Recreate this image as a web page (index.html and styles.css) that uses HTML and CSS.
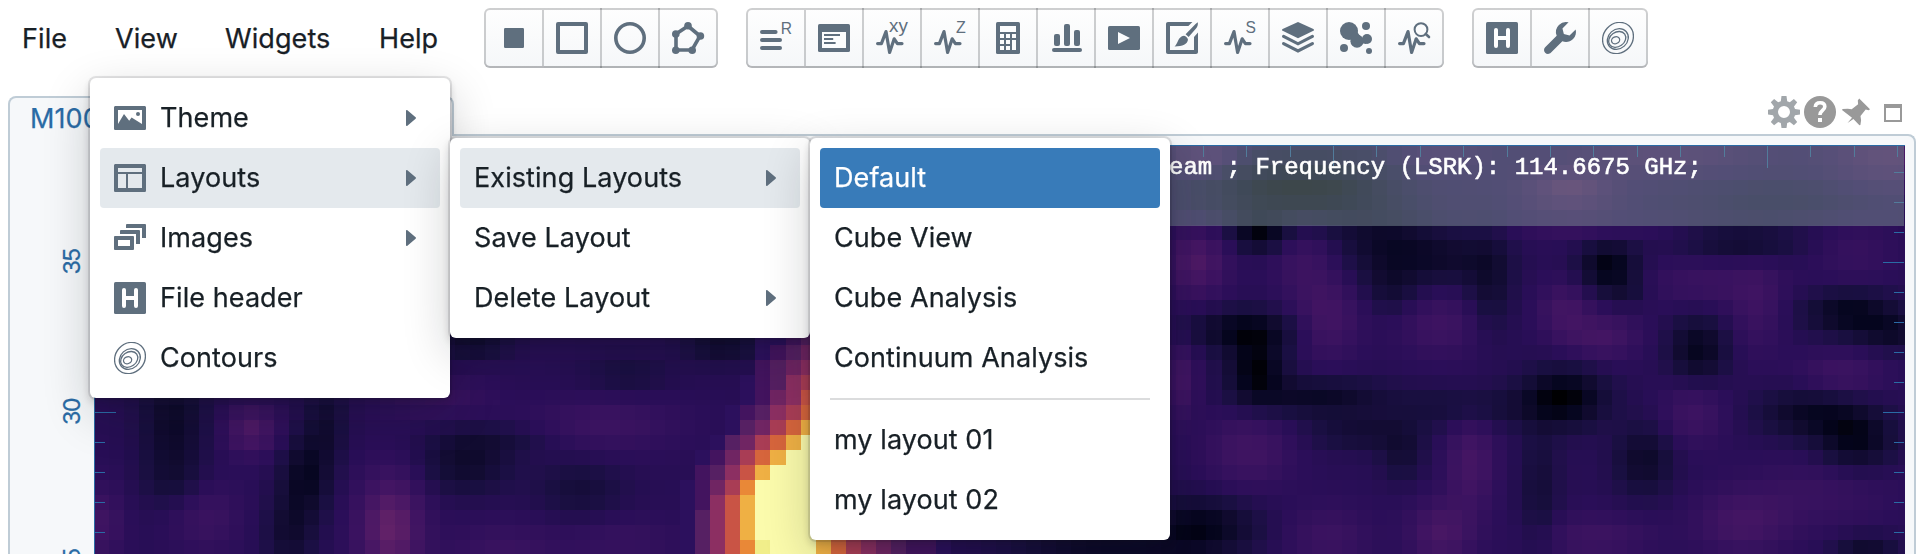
FILE: index.html
```html
<!DOCTYPE html>
<html lang="en">
<head>
<meta charset="utf-8">
<title>M100</title>
<link rel="stylesheet" href="styles.css">
</head>
<body>
<svg class="defs" width="0" height="0">
  <symbol id="pulse" viewBox="0 0 16 16"><path d="M.8 10.800h1.900L5 4.800l1.800 10.400 2.300-6.800 1.600 2.400H13" fill="none" stroke="currentColor" stroke-width="1.600" stroke-linecap="round" stroke-linejoin="round"/></symbol>
  <symbol id="header" viewBox="0 0 16 16"><rect width="16" height="16" rx=".8"/><path d="M5 4v8M11 4v8M5 8h6" stroke="#fff" stroke-width="2" stroke-linecap="round"/></symbol>
  <symbol id="contour" viewBox="0 0 16 16"><g fill="none" stroke="currentColor" stroke-width=".65"><ellipse cx="8" cy="8" rx="8.200" ry="7.300" transform="rotate(-48 8 8)"/><ellipse cx="7.900" cy="8.500" rx="5.600" ry="4.800" transform="rotate(-42 7.900 8.500)"/><ellipse cx="7.600" cy="8.700" rx="4.600" ry="3.600" transform="rotate(-35 7.600 8.700)"/><ellipse cx="6.800" cy="9.100" rx="2.100" ry="1.700" transform="rotate(-25 6.800 9.100)"/></g></symbol>
  <symbol id="caret" viewBox="0 0 10 16"><path d="M0 .8C0 0 .8-.2 1.400.3l8.200 7c.5.4.5 1 0 1.400l-8.200 7C.8 16.200 0 16 0 15.200z"/></symbol>
</svg>

<header class="topbar">
  <nav class="menubar">
    <span class="mb-item mb-file">File</span>
    <span class="mb-item mb-view">View</span>
    <span class="mb-item mb-widgets">Widgets</span>
    <span class="mb-item mb-help">Help</span>
  </nav>
  <div class="toolbars">
    <div class="group">
      <button class="tool"><svg class="icon" viewBox="0 0 16 16"><rect x="3" y="3" width="10" height="10" rx=".6"/></svg></button>
      <button class="tool"><svg class="icon" viewBox="0 0 16 16"><rect x="1" y="1" width="14" height="14" fill="none" stroke="currentColor" stroke-width="2" stroke-linejoin="round"/></svg></button>
      <button class="tool"><svg class="icon" viewBox="0 0 16 16"><circle cx="8" cy="8" r="7.100" fill="none" stroke="currentColor" stroke-width="1.800"/></svg></button>
      <button class="tool"><svg class="icon" viewBox="0 0 16 16"><path d="M8 2l6 5-4 7H2V6z" fill="none" stroke="currentColor" stroke-width="1.800"/><circle cx="8" cy="1.900" r="1.900"/><circle cx="14.200" cy="7" r="1.900"/><circle cx="10.100" cy="14.100" r="1.900"/><circle cx="1.900" cy="14.100" r="1.900"/><circle cx="1.900" cy="6" r="1.900"/></svg></button>
    </div>
    <div class="group">
      <button class="tool"><svg class="icon" viewBox="0 0 16 16"><path d="M1 5h6.800M1 9h9M1 13h9" stroke="currentColor" stroke-width="2" stroke-linecap="round"/><text x="10.400" y="5.800" font-size="7.800">R</text></svg></button>
      <button class="tool"><svg class="icon" viewBox="0 0 16 16"><rect y="1" width="16" height="14" rx=".8"/><rect x="2" y="5" width="12" height="8" fill="#fbfcfd"/><path d="M3 6.500h8M3 8.500h4.600M3 10.500h5.800" stroke="currentColor"/></svg></button>
      <button class="tool"><svg class="icon" viewBox="0 0 16 16"><use href="#pulse"/><text x="6.500" y="4.900" font-size="9.400">xy</text></svg></button>
      <button class="tool"><svg class="icon" viewBox="0 0 16 16"><use href="#pulse"/><text x="11" y="5.600" font-size="8">Z</text></svg></button>
      <button class="tool"><svg class="icon" viewBox="0 0 16 16"><rect x="2" width="12" height="16" rx=".8"/><path d="M4 2h8v3H4zM4 6h2v2H4zM7 6h2v2H7zM10 6h2v2h-2zM4 9h2v2H4zM7 9h2v2H7zM4 12h2v2H4zM7 12h2v2H7zM10 9h2v5h-2z" fill="#fbfcfd"/></svg></button>
      <button class="tool"><svg class="icon" viewBox="0 0 16 16"><rect x="2" y="6" width="3" height="6" rx="1"/><rect x="7" y="1" width="3" height="11" rx="1"/><rect x="12" y="4" width="3" height="8" rx="1"/><rect x="1" y="13" width="15" height="2" rx="1"/></svg></button>
      <button class="tool"><svg class="icon" viewBox="0 0 16 16"><rect y="2" width="16" height="12" rx=".8"/><path d="M5 5v6l6-3z" fill="#fbfcfd"/></svg></button>
      <button class="tool"><svg class="icon" viewBox="0 0 16 16"><path d="M13.200 0l-2 2H2v12h12V7.500l2-2.200V15c0 .600-.4 1-1 1H1c-.6 0-1-.4-1-1V1c0-.6.4-1 1-1z"/><path d="M15.900.1c.2 1.300-.2 2.400-.9 3.200l-3.700 4.200-1.500-1.400L13.800 2C14.400 1.300 15.100.6 15.900.1zM9 6.900c1 .2 1.800 1 2 2C10.600 11.200 8.500 12.200 4.300 12.200 6 11 5.800 7.300 9 6.900z"/></svg></button>
      <button class="tool"><svg class="icon" viewBox="0 0 16 16"><use href="#pulse"/><text x="10.800" y="5.700" font-size="7.800">S</text></svg></button>
      <button class="tool"><svg class="icon" viewBox="0 0 16 16"><path d="M8 0l7.700 3.500c.4.200.4.700 0 .9L8 8.100.3 4.400c-.4-.2-.4-.7 0-.9z"/><path d="M.8 7.200L8 10.900l7.200-3.700M.8 10.800L8 14.500l7.200-3.700" fill="none" stroke="currentColor" stroke-width="1.600" stroke-linecap="round"/></svg></button>
      <button class="tool"><svg class="icon" viewBox="0 0 16 16"><circle cx="4.500" cy="4.500" r="4.500"/><circle cx="8.500" cy="9.600" r="3.300"/><circle cx="13" cy="2" r="2"/><circle cx="13.500" cy="8.500" r="2.500"/><circle cx="2" cy="13" r="2"/><circle cx="14.500" cy="14.500" r="1.500"/><path d="M4 8l4-4 3 4.500 2-1.500v4l-5-1z"/></svg></button>
      <button class="tool"><svg class="icon" viewBox="0 0 16 16"><use href="#pulse"/><g fill="#fbfcfd" stroke="currentColor"><circle cx="11.500" cy="3.800" r="3.200"/><path d="M13.900 6l1.600 1.500" stroke-width="1.300" stroke-linecap="round"/></g></svg></button>
    </div>
    <div class="group">
      <button class="tool"><svg class="icon"><use href="#header"/></svg></button>
      <button class="tool"><svg class="icon" viewBox="0 0 16 16"><path d="M15.830 3.700l-3.060 3.050-2.840-.7-.7-2.830L12.290.17a5.004 5.004 0 00-4.830 1.290 4.967 4.967 0 00-1.120 5.360L.58 12.580c-.36.36-.58.86-.58 1.410 0 1.100.9 2 2 2 .55 0 1.050-.22 1.410-.590l5.770-5.770c1.790.69 3.910.35 5.350-1.120 1.320-1.300 1.740-3.150 1.300-4.810z"/></svg></button>
      <button class="tool"><svg class="icon"><use href="#contour"/></svg></button>
    </div>
  </div>
</header>

<main class="panel">
  <div class="tabs">
    <div class="tab">M100</div>
    <div class="controls">
      <svg class="ctl gear" viewBox="0 0 32 32"><path d="M13.500 0h5l.7 5.200 2.600 1 4.100-3.200 3.300 3.300-3.200 4.100 1 2.700 5 .6v4.800l-5 .7-1 2.600 3.200 4.100-3.300 3.300-4.100-3.200-2.600 1-.7 5h-5l-.7-5-2.600-1-4.100 3.200-3.300-3.300L6 21.800l-1-2.600-5-.7v-4.800l5-.6 1-2.700-3.200-4.100 3.300-3.300 4.100 3.200 2.600-1zM16 10a6 6 0 100 12 6 6 0 000-12z" fill-rule="evenodd"/></svg>
      <svg class="ctl help" viewBox="0 0 32 32"><circle cx="16" cy="16" r="16"/><path d="M11.300 11c.2-3 2.200-4.200 4.800-4.200 2.800 0 4.700 1.400 4.700 3.900 0 3.700-4.900 3.900-4.900 8.300" fill="none" stroke="#fff" stroke-width="3.600"/><rect x="14" y="22" width="4" height="4" fill="#fff"/></svg>
      <svg class="ctl pin" viewBox="0 0 28 28"><path d="M17.200.5L28 11.300l-1.300.9-3-.6-5.200 6.400.6 4.200-.7 4.800-1 .2-6-6.300L5.500 25 10 19.800 0 12l.6-.9 5.200-.3 3.900.5 6.400-5.100-.3-3.600z"/></svg>
      <svg class="ctl square" viewBox="0 0 18 18"><path d="M0 0h18v18H0zM2 4v12h14V4z" fill-rule="evenodd"/></svg>
    </div>
  </div>
  <section class="plot">
    <div class="axis">
      <span class="label label-35">35</span>
      <span class="label label-30">30</span>
      <span class="label label-25">25</span>
    </div>
    <div class="image">
      <canvas id="raster" width="1810" height="408"></canvas>
      <div class="infobar">eam ; Frequency (LSRK): 114.6675 GHz;</div>
    </div>
  </section>
</main>

<ul class="menu menu-view">
  <li class="item"><svg class="icon" viewBox="0 0 16 16"><path d="M.8 2h14.400c.5 0 .8.3.8.8v10.400c0 .5-.3.8-.8.8H.8c-.5 0-.8-.3-.8-.8V2.800C0 2.300.3 2 .8 2zM2 4v7l3-5 2.600 3.400 1.200-1.600L14 11V4z" fill-rule="evenodd"/><circle cx="12" cy="6" r="1"/></svg>Theme<svg class="caret"><use href="#caret"/></svg></li>
  <li class="item hover"><svg class="icon" viewBox="0 0 16 16"><path d="M.8 1h14.400c.5 0 .8.3.8.8v12.400c0 .5-.3.8-.8.8H.8c-.5 0-.8-.3-.8-.8V1.800C0 1.300.3 1 .8 1zM2 3v2h12V3zM2 6v7h4V6zM7 6v7h7V6z" fill-rule="evenodd"/></svg>Layouts<svg class="caret"><use href="#caret"/></svg></li>
  <li class="item"><svg class="icon" viewBox="0 0 16 16"><path d="M.6 7h8.800c.4 0 .6.300.6.600v5.800c0 .4-.2.600-.6.600H.6c-.4 0-.6-.2-.6-.6V7.600C0 7.300.2 7 .6 7zM2 9v3h6V9zM3.600 4h8.800c.4 0 .6.200.6.600V11h-2V6H3V4.600c0-.4.2-.6.6-.6zM6.600 1h8.800c.4 0 .6.200.6.600V8h-2V3H6V1.600c0-.4.200-.6.600-.6z" fill-rule="evenodd"/></svg>Images<svg class="caret"><use href="#caret"/></svg></li>
  <li class="item"><svg class="icon"><use href="#header"/></svg>File header</li>
  <li class="item"><svg class="icon"><use href="#contour"/></svg>Contours</li>
</ul>
<ul class="menu menu-layouts">
  <li class="item hover">Existing Layouts<svg class="caret"><use href="#caret"/></svg></li>
  <li class="item">Save Layout</li>
  <li class="item">Delete Layout<svg class="caret"><use href="#caret"/></svg></li>
</ul>
<ul class="menu menu-existing">
  <li class="item active">Default</li>
  <li class="item">Cube View</li>
  <li class="item">Cube Analysis</li>
  <li class="item">Continuum Analysis</li>
  <li class="divider"></li>
  <li class="item">my layout 01</li>
  <li class="item">my layout 02</li>
</ul>
<script src="raster.js"></script>
</body>
</html>
```
FILE: styles.css
```css
* { box-sizing: border-box; }
body {
  margin: 0;
  width: 1924px;
  height: 554px;
  overflow: hidden;
  position: relative;
  background: #fff;
  color: #182026;
  font: 27px/36px Inter, "Liberation Sans", sans-serif;
  letter-spacing: 0.08px;
  -webkit-text-stroke: 0.25px currentColor;
}
.defs { position: absolute; }
.icon { width: 32px; height: 32px; flex: none; color: #5f6f7e; fill: #5f6f7e; overflow: visible; display: block; }
.icon text { font-family: "Liberation Sans", sans-serif; letter-spacing: 0; -webkit-text-stroke: 0; }

.topbar { display: flex; height: 96px; padding: 8px 0 0 22px; }
.menubar { display: flex; height: 60px; align-items: center; padding-top: 1px; }
.mb-item { flex: none; white-space: nowrap; }
.mb-file { width: 93px; }
.mb-view { width: 110px; }
.mb-widgets { width: 154px; }
.mb-help { width: 105px; }
.toolbars { display: flex; gap: 28px; }
.group { display: flex; height: 60px; }
.tool {
  width: 60px;
  height: 60px;
  padding: 14px;
  border: 0;
  background: linear-gradient(#fefefe, #f5f7f9);
  box-shadow: inset 0 0 0 2px rgba(16,22,26,.2), inset 0 -2px 0 rgba(16,22,26,.1);
}
.tool + .tool { margin-left: -2px; box-shadow: inset 0 2px 0 rgba(16,22,26,.2), inset -2px 0 0 rgba(16,22,26,.2), inset 0 -2px 0 rgba(16,22,26,.3); clip-path: inset(0 0 0 2px); }
.tool:first-child { border-radius: 6px 0 0 6px; }
.tool:last-child { border-radius: 0 6px 6px 0; box-shadow: inset 0 0 0 2px rgba(16,22,26,.2), inset 0 -2px 0 rgba(16,22,26,.1); }

.panel { padding: 0 8px; height: 458px; }
.tabs { display: flex; justify-content: space-between; height: 38px; }
.tab {
  width: 446px;
  height: 40px;
  padding-left: 20px;
  line-height: 41px;
  color: #2a6ba5;
  background: #f6f8fa;
  border: 2px solid #bfccd6;
  border-bottom: 0;
  border-radius: 8px 8px 0 0;
  z-index: 1;
}
.controls { display: flex; padding-right: 14px; fill: #999; height: 32px; align-items: center; }
.ctl { flex: none; display: block; }
.gear { width: 32px; height: 32px; fill: #a1a6aa; }
.help { width: 32px; height: 32px; margin-left: 4px; }
.pin { width: 28px; height: 28px; margin: 0 14px 0 6px; }
.square { width: 18px; height: 18px; margin-top: 2px; }
.plot {
  display: flex;
  height: 420px;
  padding: 9px 9px 0 0;
  overflow: hidden;
  background: #f6f8fa;
  border: 2px solid #bfccd6;
  border-bottom: 0;
  border-radius: 0 8px 0 0;
}
.axis { width: 84px; position: relative; color: #2a6ba5; font-size: 23.5px; letter-spacing: -1.8px; }
.label { position: absolute; left: 42px; width: 40px; height: 30px; line-height: 30px; text-align: center; transform: rotate(-90deg); }
.label-35 { top: 102px; }
.label-30 { top: 252px; }
.label-25 { top: 402px; }
.image { position: relative; width: 1811px; height: 409px; border: 1px solid #2a6ba5; border-bottom: 0; }
.image canvas { display: block; }
.infobar {
  position: absolute;
  inset: 0 0 auto 0;
  height: 80px;
  padding: 8px 0 0 1074px;
  background: rgba(122,142,146,.5);
  color: #fff;
  font: 24px/28px "Liberation Mono", monospace;
  letter-spacing: 0;
  -webkit-text-stroke: 0.6px #fff;
  white-space: pre;
}

.menu {
  position: absolute;
  width: 360px;
  margin: 0;
  padding: 10px;
  list-style: none;
  background: #fff;
  border-radius: 6px;
  box-shadow: 0 0 0 2px rgba(16,22,26,.1), 0 4px 8px rgba(16,22,26,.2), 0 16px 48px rgba(16,22,26,.2);
}
.menu-view { left: 90px; top: 78px; z-index: 2; }
.menu-layouts { left: 450px; top: 138px; z-index: 3; }
.menu-existing { left: 810px; top: 138px; z-index: 4; }
.item { display: flex; align-items: center; height: 60px; padding: 0 24px 0 14px; border-radius: 4px; white-space: nowrap; }
.item .icon { margin-right: 14px; }
.hover { background: rgba(167,182,194,.3); }
.active { background: #387bb9; color: #fff; }
.caret { width: 10px; height: 16px; margin-left: auto; fill: #5f6f7e; }
.divider { height: 2px; margin: 10px; background: #dbdcdd; }
```
FILE: raster.js
```js
// Pixel grid of the radio map, in page coordinates.
const OX = 95, OY = 146, CW = 15.035, CH = 15;
const ctx = document.getElementById('raster').getContext('2d');

const stops = [
  [0, 0, 0, 2], [.1, 5, 5, 30], [.2, 17, 11, 48], [.3, 26, 15, 66], [.4, 42, 14, 88],
  [.5, 56, 18, 95], [.62, 70, 22, 100], [.8, 100, 34, 104], [1, 130, 44, 104]
];
function shade(v) {
  v = Math.max(0, Math.min(1, v));
  let i = 1;
  while (i < stops.length - 1 && stops[i][0] < v) i++;
  const a = stops[i - 1], b = stops[i], t = (v - a[0]) / (b[0] - a[0]);
  return `rgb(${[1, 2, 3].map(k => Math.round(a[k] + (b[k] - a[k]) * t))})`;
}

// Noise features: x, y, sigma x, sigma y, amplitude.
const blobs = [
  [1197,262,20,24,.28],[1303,260,22,28,.14],[1328,318,22,28,.2],[1441,325,28,22,.16],[1565,311,18,20,.2],
  [1604,337,24,16,.2],[1708,283,45,16,.13],[1757,310,18,30,.14],[1841,375,30,16,.16],[1856,253,28,22,.1],
  [1180,380,12,25,.2],[1249,450,30,26,.18],[1693,413,22,22,.16],[1471,463,17,34,.22],[1441,533,22,22,.24],
  [1742,523,32,22,.2],[1821,493,50,25,.11],[1594,537,40,16,.15],[1328,537,30,22,.14],[1584,230,50,9,.1],
  [1204,152,25,15,.3],[1570,190,30,15,.34],[1890,157,40,20,.28],[1668,152,60,15,.2],[1440,150,30,15,.15],
  [1260,234,18,12,-.28],[1244,330,35,14,-.3],[1256,370,20,22,-.36],[1318,397,45,13,-.24],[1387,247,32,25,-.2],
  [1446,258,35,18,-.18],[1392,290,18,16,-.13],[1490,283,16,34,-.17],[1609,267,20,18,-.34],[1629,292,14,10,-.1],
  [1698,350,20,22,-.28],[1851,313,32,15,-.3],[1895,333,25,12,-.2],[1565,397,28,20,-.35],[1811,413,36,17,-.25],
  [1856,440,26,20,-.3],[1644,460,20,24,-.22],[1362,433,38,12,-.16],[1402,455,15,18,-.15],[1200,527,38,20,-.3],
  [1540,490,14,45,-.14],[1866,547,22,9,-.2],[1742,243,40,12,-.18],[1471,407,60,14,-.14],[1270,190,50,25,-.32],
  [1780,200,60,15,-.1],[1345,190,40,25,-.22],
  [252,430,18,17,.28],[390,528,22,36,.4],[206,517,25,25,.13],[103,523,14,25,.17],[607,424,50,19,.14],
  [434,397,38,14,.12],[623,540,40,16,.1],[504,550,40,20,.12],[173,423,22,34,-.22],[173,480,22,20,-.12],
  [326,425,14,28,-.16],[306,477,17,28,-.26],[290,533,17,26,-.18],[466,464,30,20,-.2],[500,440,40,11,-.1],
  [580,489,30,20,-.13],[473,342,25,11,-.2],[723,343,26,13,-.2],[627,375,30,14,-.1],
  [1100,550,60,15,-.22]
];

// Hot source: for each row, the starting column and the colours of the cells that follow.
const palette = {
  a: '#2c105d', b: '#43145f', c: '#562063', d: '#702563', e: '#8c2f62', f: '#a93d55',
  g: '#c95445', h: '#d6653c', i: '#e98837', j: '#efb044', k: '#f1ee8a', y: '#fbfbac'
};
const source = {
  330: [41, 'aabc'], 345: [41, 'abcd'], 360: [41, 'bcde'], 375: [40, 'abcef'], 390: [40, 'abdeg'],
  405: [39, 'abcefh'], 420: [39, 'acdfhj'], 435: [38, 'acdfhjy'], 450: [37, 'abdfhjyy'],
  465: [37, 'bcegjyyy'], 480: [36, 'abdfiyyyy'], 495: [36, 'abegjyyyy'], 510: [36, 'acegjyyyy'],
  525: [36, 'acegjyyyy'], 540: [36, 'acegikyyyjhfedcbba']
};

for (let r = 9; r < 37; r++) {
  const y = r * CH;
  for (let c = -3; c < 118; c++) {
    const x = 139 + c * CW, cx = x + CW / 2, cy = y + CH / 2;
    let v = .385;
    for (const [bx, by, sx, sy, a] of blobs) {
      const u = (cx - bx) / sx, w = (cy - by) / sy;
      v += a * Math.exp(-(u * u + w * w) / 2);
    }
    const row = source[y];
    const hot = row && c >= row[0] && row[1][c - row[0]];
    ctx.fillStyle = hot ? palette[hot] : shade(v);
    const x0 = Math.round(x), x1 = Math.round(x + CW);
    ctx.fillRect(x0 - OX, y - OY, x1 - x0, CH);
  }
}

// Axis ticks.
ctx.fillStyle = '#2a6ba5';
for (let y = 172; y < 554; y += 30) {
  const len = (y - 112) % 150 === 0 ? 21 : 10;
  ctx.fillRect(0, y - OY, len, 1);
  ctx.fillRect(1809 - len, y - OY, len, 1);
}
for (let k = -14; k <= 3; k++) {
  ctx.fillRect(Math.round(1767 + k * 43.4) - OX, 0, 1, k % 10 === 0 ? 22 : 11);
}
```
